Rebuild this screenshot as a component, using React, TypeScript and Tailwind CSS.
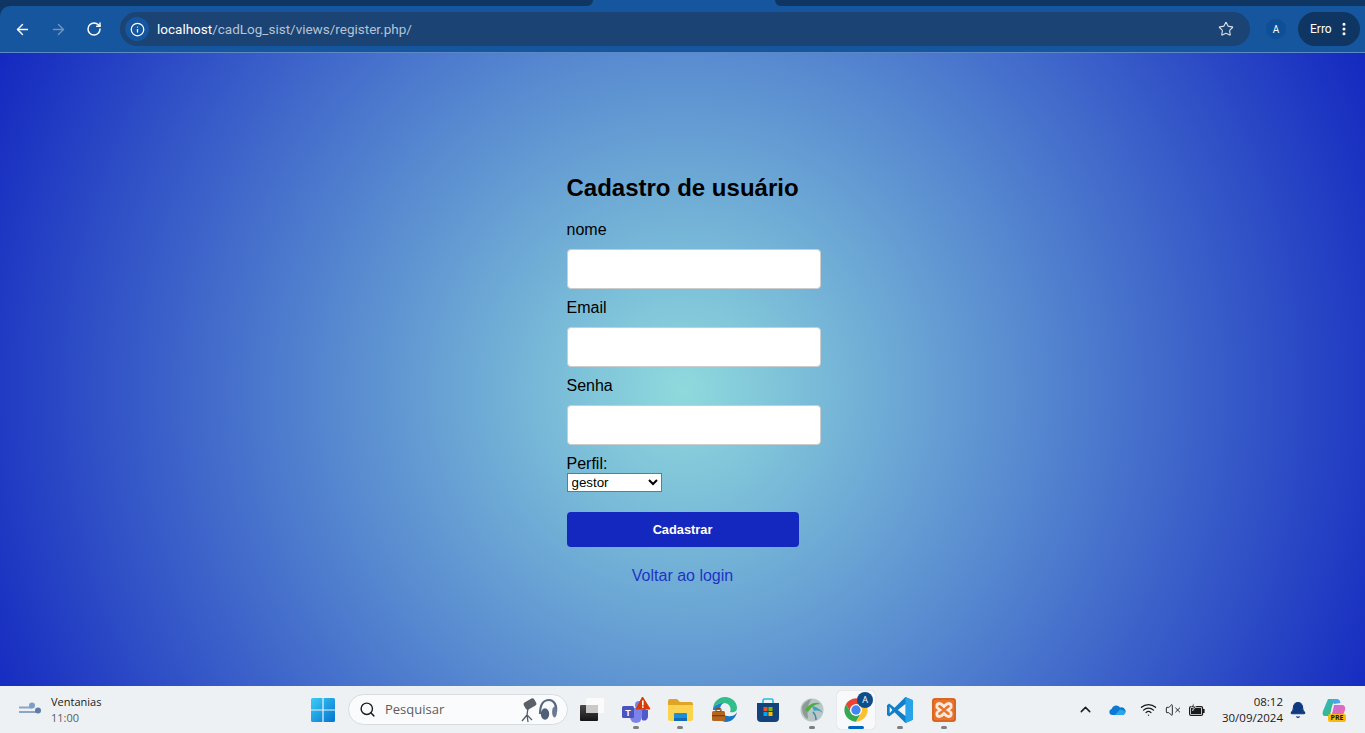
import type { ReactNode } from "react";
import { ArrowLeft, ArrowRight, RotateCw, Info, Star, EllipsisVertical, Search, ChevronUp, Wifi, VolumeX, Bell } from "lucide-react";

function WindowsLogo() {
  return (
    <svg width="24" height="24" viewBox="0 0 24 24">
      <defs>
        <linearGradient id="win" x1="0" y1="0" x2="1" y2="1">
          <stop offset="0" stopColor="#3ccdf8" />
          <stop offset="1" stopColor="#0572cf" />
        </linearGradient>
      </defs>
      <path fill="url(#win)" d="M0 1.5A1.5 1.5 0 0 1 1.5 0H11.4V11.4H0ZM12.6 0H22.5A1.5 1.5 0 0 1 24 1.5V11.4H12.6ZM0 12.6H11.4V24H1.5A1.5 1.5 0 0 1 0 22.5ZM12.6 12.6H24V22.5A1.5 1.5 0 0 1 22.5 24H12.6Z" />
    </svg>
  );
}

function WindIcon() {
  return (
    <svg width="24" height="18" viewBox="0 0 24 18" fill="none">
      <path d="M1 6.5H14M1 11H19" stroke="#8ba6c6" strokeWidth="1.8" />
      <circle cx="14" cy="4.5" r="3" fill="#7d9dc4" />
      <circle cx="20" cy="9.5" r="3" fill="#5f7da5" />
    </svg>
  );
}

function MicHeadset() {
  return (
    <svg width="40" height="28" viewBox="0 0 40 28" fill="none">
      <rect x="5" y="4" width="12" height="8" rx="2" transform="rotate(-30 11 8)" fill="#5a5f68" />
      <path d="M9 12L8 19M8 19L3 25M8 19L9 26M8 19L13 24" stroke="#555a63" strokeWidth="1.3" />
      <path d="M21 18C21 8 25 4 30 4C35 4 38 9 37 16" stroke="#59697f" strokeWidth="2.2" />
      <ellipse cx="26" cy="18" rx="4.2" ry="5.8" fill="#4f5f76" />
      <ellipse cx="35.5" cy="16" rx="2.4" ry="5.4" fill="#6b7a90" />
    </svg>
  );
}

function TaskView() {
  return (
    <svg width="24" height="24" viewBox="0 0 24 24">
      <defs>
        <linearGradient id="tvf" x1="0" y1="0" x2="0" y2="1">
          <stop offset="0" stopColor="#4a4a4a" />
          <stop offset="1" stopColor="#141414" />
        </linearGradient>
      </defs>
      <rect x="6" y="0" width="18" height="15" rx="1" fill="#fbfbfb" />
      <rect x="0" y="7" width="18" height="16" rx="1" fill="url(#tvf)" />
      <rect x="6" y="7" width="12" height="8" fill="#c9c9c9" />
    </svg>
  );
}

function TeamsIcon() {
  return (
    <svg width="29" height="28" viewBox="0 0 29 28">
      <circle cx="17" cy="9" r="4" fill="#7b83eb" />
      <circle cx="22" cy="11" r="3" fill="#5a5fc4" />
      <path d="M8 12H20V21A6 6 0 0 1 8 21Z" fill="#7b83eb" />
      <path d="M20 14H26V20A4 4 0 0 1 20 24Z" fill="#5059c9" />
      <rect x="0" y="10" width="12" height="12" rx="1.5" fill="#4b53bc" />
      <text x="6" y="19.5" textAnchor="middle" fontSize="9" fontWeight="700" fill="#fff" fontFamily="Liberation Sans">T</text>
      <path d="M14 13L20.5 1L28 13Z" fill="#d83b01" stroke="#d83b01" strokeWidth="1" strokeLinejoin="round" />
      <rect x="20" y="4.5" width="1.6" height="5" fill="#fff" />
      <rect x="20" y="10.3" width="1.6" height="1.6" fill="#fff" />
    </svg>
  );
}

function FolderIcon() {
  return (
    <svg width="25" height="22" viewBox="0 0 25 22">
      <path d="M0 2A2 2 0 0 1 2 0H9L12 3H23A2 2 0 0 1 25 5V8H0Z" fill="#e0a526" />
      <path d="M0 6H25V20A2 2 0 0 1 23 22H2A2 2 0 0 1 0 20Z" fill="#fbd34f" />
      <rect x="6" y="14" width="13" height="8" rx="1" fill="#1b8ed6" />
      <rect x="6" y="19" width="13" height="3" fill="#0f6cb5" />
    </svg>
  );
}

function EdgeIcon() {
  return (
    <svg width="25" height="26" viewBox="0 0 25 26">
      <path d="M1 11C2 4 7 0 13 0C20 0 25 5 25 11C25 15 21 16 18 15C20 11 17 6 12 6C7 6 3 8 1 11Z" fill="#32bd8b" />
      <path d="M1 11C3 8 7 6 12 6C9 7 8 10 8 13H1Z" fill="#1b80cf" />
      <path d="M8 12C9 17 14 20 19 19C22 19 24 17 25 15C24 21 19 25 14 25C12 25 10 24 9 23Z" fill="#1677c7" />
      <rect x="0" y="14" width="13" height="10" rx="1.5" fill="#b5651d" />
      <rect x="4" y="11.5" width="5" height="3" rx="1" fill="none" stroke="#8a4b12" strokeWidth="1.2" />
      <rect x="0" y="18" width="13" height="1.3" fill="#7a4210" />
    </svg>
  );
}

function StoreIcon() {
  return (
    <svg width="24" height="24" viewBox="0 0 24 24">
      <path d="M7 5V2.5A1.5 1.5 0 0 1 8.5 1H15.5A1.5 1.5 0 0 1 17 2.5V5" fill="none" stroke="#28b8e8" strokeWidth="1.6" />
      <path d="M1 5H23V20A4 4 0 0 1 19 24H5A4 4 0 0 1 1 20Z" fill="#14427a" />
      <rect x="7.5" y="9" width="4" height="4" fill="#f25022" />
      <rect x="12.5" y="9" width="4" height="4" fill="#7fba00" />
      <rect x="7.5" y="14" width="4" height="4" fill="#00a4ef" />
      <rect x="12.5" y="14" width="4" height="4" fill="#ffb900" />
    </svg>
  );
}

function GlobeIcon() {
  return (
    <svg width="24" height="24" viewBox="0 0 24 24">
      <circle cx="12" cy="12" r="11.5" fill="#b9c6c4" />
      <path d="M2 9C4 5 7 2 12 1C8 5 7 11 8 21C4 19 2 15 2 9Z" fill="#8d9a96" />
      <path d="M5 12C9 6 16 3 20 6C15 6 11 9 8 14Z" fill="#4fae3c" />
      <path d="M12 8C17 9 21 12 23 15C21 13 17 12 14 13Z" fill="#3d9fc2" />
      <path d="M13 14C15 16 16 19 16 22" stroke="#3d8ea8" strokeWidth="1.5" fill="none" />
    </svg>
  );
}

function ChromeIcon() {
  return (
    <div className="flex h-[40px] w-[44px] items-center justify-center">
      <div className="relative flex h-[38px] w-[38px] items-center justify-center rounded-[4px] bg-[#f8f9fa] shadow-[0_0_1px_rgba(0,0,0,0.25)]">
        <svg width="28" height="28" viewBox="0 0 48 48" className="mt-[1px]">
          <path d="M6.68 14A20 20 0 0 1 41.32 14H24A10 10 0 0 0 15.34 29Z" fill="#ea4335" />
          <path d="M6.68 14A20 20 0 0 0 24 44L32.66 29A10 10 0 0 1 15.34 29Z" fill="#34a853" />
          <path d="M24 44A20 20 0 0 0 41.32 14H24A10 10 0 0 1 32.66 29Z" fill="#fbc02d" />
          <circle cx="24" cy="24" r="10" fill="#fff" />
          <circle cx="24" cy="24" r="8" fill="#4285f4" />
        </svg>
        <span className="absolute right-[2px] top-[1px] flex h-[16px] w-[16px] items-center justify-center rounded-full bg-[#0f4c8a] text-[9px] text-white">A</span>
        <span className="absolute bottom-0 h-[3px] w-[16px] rounded-full bg-[#0067c0]" />
      </div>
    </div>
  );
}

function VsCodeIcon() {
  return (
    <svg width="26" height="26" viewBox="0 0 24 24">
      <path d="M17 0L24 3V21L17 24L7 14L2 18L0 16.5V7.5L2 6L7 10Z" fill="#0f7fc8" />
      <path d="M17 0L24 3V21L17 24Z" fill="#27a3ea" />
      <path d="M17 6.5L10 12L17 17.5Z" fill="#f4f6f8" />
      <path d="M2.5 9L5 12L2.5 15Z" fill="#f4f6f8" />
    </svg>
  );
}

function XamppIcon() {
  return (
    <svg width="24" height="24" viewBox="0 0 24 24">
      <rect width="24" height="24" rx="3" fill="#e8732c" />
      <rect x="1" y="1" width="22" height="22" rx="2.5" fill="none" stroke="#c95a1c" strokeWidth="1" />
      <path d="M7.5 5.5C4.5 5.5 4 9 6 10.5L8 12L6 13.5C4 15 4.5 18.5 7.5 18.5C9.5 18.5 10.5 17 12 15.5C13.5 17 14.5 18.5 16.5 18.5C19.5 18.5 20 15 18 13.5L16 12L18 10.5C20 9 19.5 5.5 16.5 5.5C14.5 5.5 13.5 7 12 8.5C10.5 7 9.5 5.5 7.5 5.5Z" fill="#e8732c" stroke="#fbeadd" strokeWidth="2.8" />
    </svg>
  );
}

function OneDriveIcon() {
  return (
    <svg width="17" height="11" viewBox="0 0 17 11">
      <path d="M3 11A3 3 0 0 1 2.6 5.1A4.6 4.6 0 0 1 11 3.6A3.7 3.7 0 0 1 14 11Z" fill="#0f78d4" />
      <path d="M6 11L11 5.5L14 6.2A2.5 2.5 0 0 1 14.4 11Z" fill="#28a8ea" />
    </svg>
  );
}

function BatteryIcon() {
  return (
    <svg width="16" height="14" viewBox="0 0 16 14" fill="none">
      <rect x="0.6" y="3.6" width="13" height="8.8" rx="1.5" stroke="#1a1a1a" strokeWidth="1.2" />
      <rect x="2" y="5" width="10.2" height="6" fill="#1a1a1a" />
      <rect x="14" y="6" width="1.6" height="4" fill="#1a1a1a" />
      <path d="M5 0L2 4.5H4.5L3.5 8L7 3.5H4.8Z" fill="#1a1a1a" stroke="#eef1f4" strokeWidth="0.6" />
    </svg>
  );
}

function CopilotIcon() {
  return (
    <div className="relative h-[24px] w-[24px]">
      <svg width="24" height="20" viewBox="0 0 24 20">
        <defs>
          <linearGradient id="cpa" x1="0" y1="0" x2="1" y2="1">
            <stop offset="0" stopColor="#2fb6e8" />
            <stop offset="1" stopColor="#3fb950" />
          </linearGradient>
          <linearGradient id="cpb" x1="0" y1="0" x2="1" y2="1">
            <stop offset="0" stopColor="#c86de8" />
            <stop offset="1" stopColor="#f26a9c" />
          </linearGradient>
        </defs>
        <path d="M6 1H13C10 6 9 12 8 18H3C1 18 0 16 1 13Z" fill="url(#cpa)" />
        <path d="M8 1H15C17 1 18 3 18.5 5L12 6Z" fill="#49a7e8" />
        <path d="M12 7H20C22 7 24 9 23 12L21 17C20 19 18 19 16 19H8C11 15 11 11 12 7Z" fill="url(#cpb)" />
      </svg>
      <span className="absolute bottom-0 left-[6px] flex h-[8px] w-[18px] items-center justify-center rounded-[2px] bg-[#fbb80f] text-[7px] font-bold leading-none text-[#1a1a1a]">PRE</span>
    </div>
  );
}

function Dot({ icon, dot = true }: { icon: ReactNode; dot?: boolean }) {
  return (
    <div className="relative flex h-[40px] w-[44px] items-center justify-center">
      {icon}
      {dot && <span className="absolute bottom-[1px] h-[3px] w-[6px] rounded-full bg-[#7b7f84]" />}
    </div>
  );
}

function Field({ label }: { label: string }) {
  return (
    <div className="flex flex-col">
      <label className="mb-[10px] pt-[1px] text-[16px] leading-[18px] text-black">{label}</label>
      <input className="mb-[9px] h-[40px] w-[254px] rounded-[4px] border border-[#cccccc] bg-white" />
    </div>
  );
}

export default function App() {
  return (
    <div className="flex h-[733px] w-[1365px] flex-col overflow-hidden font-['Liberation_Sans',Arial,sans-serif]">
      <header className="h-[53px] shrink-0 bg-[#15569e]">
        <div className="flex h-[6px]">
          <div className="h-[6px] w-[593px] rounded-br-[7px] bg-[#0f3663]" />
          <div className="ml-auto h-[6px] w-[590px] rounded-bl-[7px] bg-[#0f3663]" />
        </div>
        <div className="bg-[linear-gradient(#0f3663,#0f3663_10px,transparent_10px)]">
          <div className="flex h-[47px] items-center rounded-tl-[10px] border-b border-[#5c8ac4] bg-[#15569e] pl-[4px] pr-[5px]">
            <button className="flex h-[36px] w-[36px] items-center justify-center text-white"><ArrowLeft size={17} strokeWidth={2} /></button>
            <button className="flex h-[36px] w-[36px] items-center justify-center text-[#6f93c0]"><ArrowRight size={17} strokeWidth={2} /></button>
            <button className="flex h-[36px] w-[36px] items-center justify-center text-white"><RotateCw size={16} strokeWidth={2.2} /></button>
            <div className="ml-[8px] flex h-[34px] w-[1130px] items-center rounded-full bg-[#1b4373] pl-[5px] pr-[16px]">
              <span className="flex h-[24px] w-[24px] items-center justify-center rounded-full bg-[#15569e] text-white"><Info size={15} /></span>
              <span className="ml-[8px] font-['Roboto',sans-serif] text-[13.5px]">
                <span className="text-white">localhost</span>
                <span className="text-[#b4c4d8]">/cadLog_sist/views/register.php/</span>
              </span>
              <Star size={16} strokeWidth={1.7} className="ml-auto text-[#d7dee8]" />
            </div>
            <span className="ml-[16px] flex h-[20px] w-[20px] items-center justify-center rounded-full bg-[#0e4f95] font-['Roboto',sans-serif] text-[10px] text-white">A</span>
            <div className="ml-[12px] flex h-[34px] w-[62px] items-center rounded-full bg-[#0f3663] pl-[12px] font-['Roboto',sans-serif] text-[12px] text-white">
              Erro
              <EllipsisVertical size={16} strokeWidth={2.6} className="ml-[4px]" />
            </div>
          </div>
        </div>
      </header>

      <main className="flex min-h-0 flex-1 justify-center bg-[radial-gradient(circle_at_50%_53.2%,#8fdadd_0%,#1428c0_100%)]">
        <div className="w-[232px] pt-[121px]">
          <h2 className="mb-[19px] whitespace-nowrap text-[24px] font-bold leading-[27px] text-black">Cadastro de usuário</h2>
          <Field label="nome" />
          <Field label="Email" />
          <Field label="Senha" />
          <label className="block pt-[1px] text-[16px] leading-[18px] text-black">Perfil:</label>
          <select className="block h-[19px] w-[95px] rounded-none border border-[#767676] bg-white text-[13.33px] text-black [appearance:auto]">
            <option>gestor</option>
          </select>
          <button className="mt-[20px] h-[35px] w-[232px] rounded-[4px] bg-[#1428c0] text-[12.8px] font-bold text-white">Cadastrar</button>
          <a className="mt-[20px] block w-[232px] text-center text-[16px] leading-[18px] text-[#1d35c4]">Voltar ao login</a>
        </div>
      </main>

      <footer className="flex h-[47px] shrink-0 items-center bg-[#eef1f4] font-['Open_Sans',sans-serif]">
        <div className="ml-[18px] flex w-[290px] items-center">
          <WindIcon />
          <div className="ml-[9px] flex flex-col text-[11px] leading-[16px]">
            <span className="text-[#1a1a1a]">Ventanias</span>
            <span className="text-[#5c5c5c]">11:00</span>
          </div>
        </div>
        <div className="ml-[3px] flex h-[24px] w-[24px] items-center justify-center"><WindowsLogo /></div>
        <div className="ml-[13px] flex h-[31px] w-[220px] items-center rounded-full border border-[#d9dcdf] bg-[#fafbfc] pl-[10px] pr-[8px]">
          <Search size={17} strokeWidth={2} className="text-[#1c1c1c]" />
          <span className="ml-[9px] mt-[1px] text-[13px] text-[#5c5c5c]">Pesquisar</span>
          <span className="ml-auto"><MicHeadset /></span>
        </div>
        <div className="ml-[2px] flex items-center">
          <Dot icon={<TaskView />} dot={false} />
          <Dot icon={<TeamsIcon />} />
          <Dot icon={<FolderIcon />} />
          <Dot icon={<EdgeIcon />} dot={false} />
          <Dot icon={<StoreIcon />} dot={false} />
          <Dot icon={<GlobeIcon />} />
          <ChromeIcon />
          <Dot icon={<VsCodeIcon />} />
          <Dot icon={<XamppIcon />} />
        </div>
        <div className="ml-auto flex items-center pr-[19px]">
          <ChevronUp size={17} strokeWidth={2} className="text-[#1a1a1a]" />
          <span className="ml-[15px]"><OneDriveIcon /></span>
          <Wifi size={17} strokeWidth={1.8} className="ml-[14px] text-[#1a1a1a]" />
          <VolumeX size={16} strokeWidth={1.4} className="ml-[8px] text-[#1a1a1a]" />
          <span className="ml-[8px]"><BatteryIcon /></span>
          <div className="ml-[17px] flex flex-col items-end text-[11.5px] leading-[16px] text-[#1a1a1a]">
            <span>08:12</span>
            <span>30/09/2024</span>
          </div>
          <Bell size={18} fill="#0f3a80" strokeWidth={1.5} className="ml-[6px] text-[#0f3a80]" />
          <span className="ml-[15px]"><CopilotIcon /></span>
        </div>
      </footer>
    </div>
  );
}
